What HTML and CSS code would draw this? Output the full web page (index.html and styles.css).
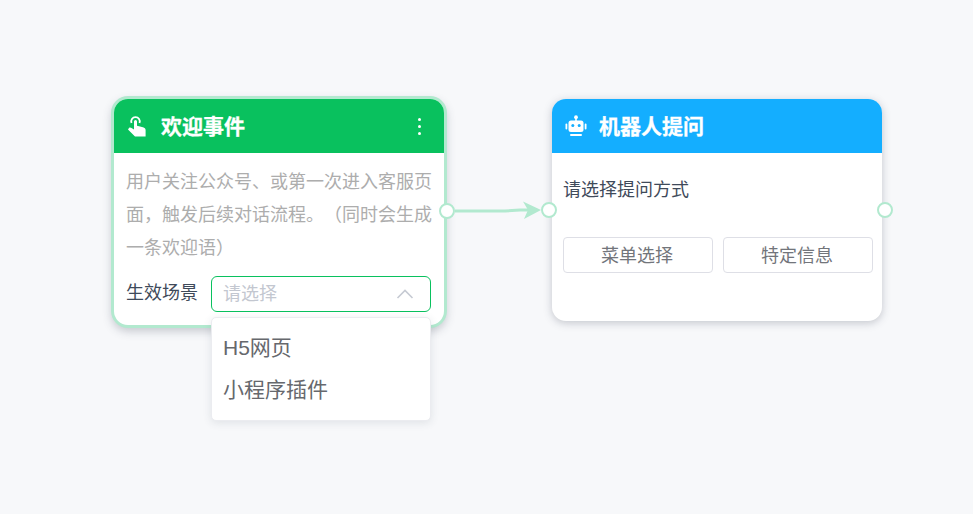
FILE: index.html
```html
<!DOCTYPE html>
<html lang="zh-CN">
<head>
<meta charset="utf-8">
<title>流程</title>
<link rel="stylesheet" href="styles.css">
</head>
<body>
<main class="canvas">
  <svg class="edge" width="973" height="514" viewBox="0 0 973 514">
    <path d="M455 211 H505 L520 210 H530" fill="none" stroke="#b2e9cf" stroke-width="3"/>
    <path d="M523 201.500 L541 210 L524 219 L528 210 Z" fill="#b2e9cf"/>
  </svg>

  <section class="node node-welcome">
    <header class="node-head head-green">
      <svg class="head-icon" width="20" height="22" viewBox="0 0 20 22">
        <path d="M4.500 8 A4.300 4.300 0 1 1 12.500 8" fill="none" stroke="#fff" stroke-width="1.800"/>
        <path d="M7 6.500a1.500 1.500 0 0 1 3 0v4.200l6 1.500c1.500.4 2.600 1.400 2.600 2.800V21.500H8L1 14.500l1-1.400c.7-.7 1.600-.6 2.500 0L7 14.500Z" fill="#fff"/>
      </svg>
      <h2 class="node-title">欢迎事件</h2>
      <span class="more"><i></i><i></i><i></i></span>
    </header>
    <div class="welcome-body">
      <p class="desc">用户关注公众号、或第一次进入客服页面，触发后续对话流程。（同时会生成一条欢迎语）</p>
      <div class="field">
        <span class="field-label">生效场景</span>
        <div class="select">
          <span class="placeholder">请选择</span>
          <svg width="18" height="10" viewBox="0 0 18 10"><path d="M1.500 9 9 1.500 16.500 9" fill="none" stroke="#c6cad3" stroke-width="1.600"/></svg>
        </div>
      </div>
    </div>
    <span class="port port-out-welcome"></span>
  </section>

  <ul class="dropdown">
    <li>H5网页</li>
    <li>小程序插件</li>
  </ul>

  <section class="node node-robot">
    <header class="node-head head-blue">
      <svg class="head-icon" width="22" height="22" viewBox="0 0 22 22">
        <circle cx="11" cy="2.200" r="1.900" fill="#fff"/>
        <rect x="10.200" y="3" width="1.600" height="3.500" fill="#fff"/>
        <rect x="3.500" y="5.500" width="15" height="11.500" rx="2.500" fill="#fff"/>
        <rect x="0.500" y="8.500" width="1.800" height="6" rx=".9" fill="#fff"/>
        <rect x="19.700" y="8.500" width="1.800" height="6" rx=".9" fill="#fff"/>
        <circle cx="7.800" cy="10.600" r="1.500" fill="#14aeff"/>
        <circle cx="14.200" cy="10.600" r="1.500" fill="#14aeff"/>
        <rect x="5" y="19" width="12" height="2" rx="1" fill="#fff"/>
      </svg>
      <h2 class="node-title">机器人提问</h2>
    </header>
    <div class="robot-body">
      <p class="question">请选择提问方式</p>
      <div class="choices">
        <button class="choice">菜单选择</button>
        <button class="choice">特定信息</button>
      </div>
    </div>
    <span class="port port-in"></span>
    <span class="port port-out"></span>
  </section>
</main>
</body>
</html>
```

FILE: styles.css
```css
* { box-sizing: border-box; }
html, body { margin: 0; height: 100%; }
body {
  background: #f7f8fa;
  font-family: "Liberation Sans", "Noto Sans CJK SC", sans-serif;
  text-spacing-trim: space-all;
  overflow: hidden;
}
.canvas { position: relative; width: 973px; height: 514px; }
.edge { position: absolute; left: 0; top: 0; }
.node {
  position: absolute;
  width: 330px;
  background: #fff;
  border-radius: 14px;
  box-shadow: 0 2px 8px rgba(60, 70, 90, .28);
}
.node-welcome {
  left: 114px; top: 99px; height: 226px;
  box-shadow: 0 0 0 3px #b2e9cf, 0 4px 10px 2px rgba(60, 70, 90, .28);
}
.node-robot { left: 552px; top: 99px; height: 222px; }
.node-head {
  height: 54px;
  display: flex;
  align-items: center;
  padding: 0 14px 0 13px;
  border-radius: 14px 14px 0 0;
  color: #fff;
}
.head-green { background: #09c15e; }
.head-blue { background: #14aeff; }
.head-icon { flex: none; margin-right: 14px; }
.head-blue .head-icon { margin-right: 12px; }
.node-title {
  margin: 2px 0 0;
  font-size: 21px;
  font-weight: 700;
  line-height: 52px;
  flex: 1;
  -webkit-text-stroke: .3px #fff;
}
.more { display: flex; flex-direction: column; gap: 4px; margin-right: 9px; }
.more i { width: 3px; height: 3px; border-radius: 50%; background: #fff; display: block; }
.welcome-body { padding: 13px 12px 0; }
.desc { margin: 0; font-size: 18px; line-height: 33px; color: #adadad; width: 306px; }
.field { display: flex; align-items: center; margin-top: 11px; }
.field-label { font-size: 18px; line-height: 35px; color: #3f4a5a; width: 85px; height: 36px; }
.select {
  width: 220px; height: 36px;
  border: 1px solid #09c15e;
  border-radius: 6px;
  display: flex; align-items: center; justify-content: space-between;
  padding: 0 16px 0 11px;
  background: #fff;
}
.placeholder { font-size: 18px; line-height: 34px; height: 34px; color: #c3c7d0; }
.dropdown {
  position: absolute; left: 211px; top: 317px;
  width: 220px; height: 104px;
  margin: 0; padding: 9px 11px;
  list-style: none;
  background: #fff;
  border: 1px solid #ebecf0;
  border-radius: 5px;
  box-shadow: 0 2px 8px rgba(60, 70, 90, .12);
}
.dropdown li { font-size: 21px; line-height: 42px; color: #66686d; }
.robot-body { padding: 21px 0 0 11px; }
.question { margin: 0; font-size: 18px; line-height: 33px; color: #3f4a5a; }
.choices { display: flex; gap: 10px; margin-top: 30px; }
.choice {
  flex: none;
  width: 150px; height: 36px; padding: 0 2px 3px 0;
  font: inherit; font-size: 18px; color: #72757b;
  background: #fff;
  border: 1px solid #dedfe6;
  border-radius: 4px;
}
.port {
  position: absolute; width: 16px; height: 16px;
  background: #fff;
  border: 2px solid #b2e9cf;
  border-radius: 50%;
}
.port-out-welcome { left: 325px; top: 104px; }
.port-in { left: -11px; top: 103px; }
.port-out { left: 325px; top: 103px; }
```
